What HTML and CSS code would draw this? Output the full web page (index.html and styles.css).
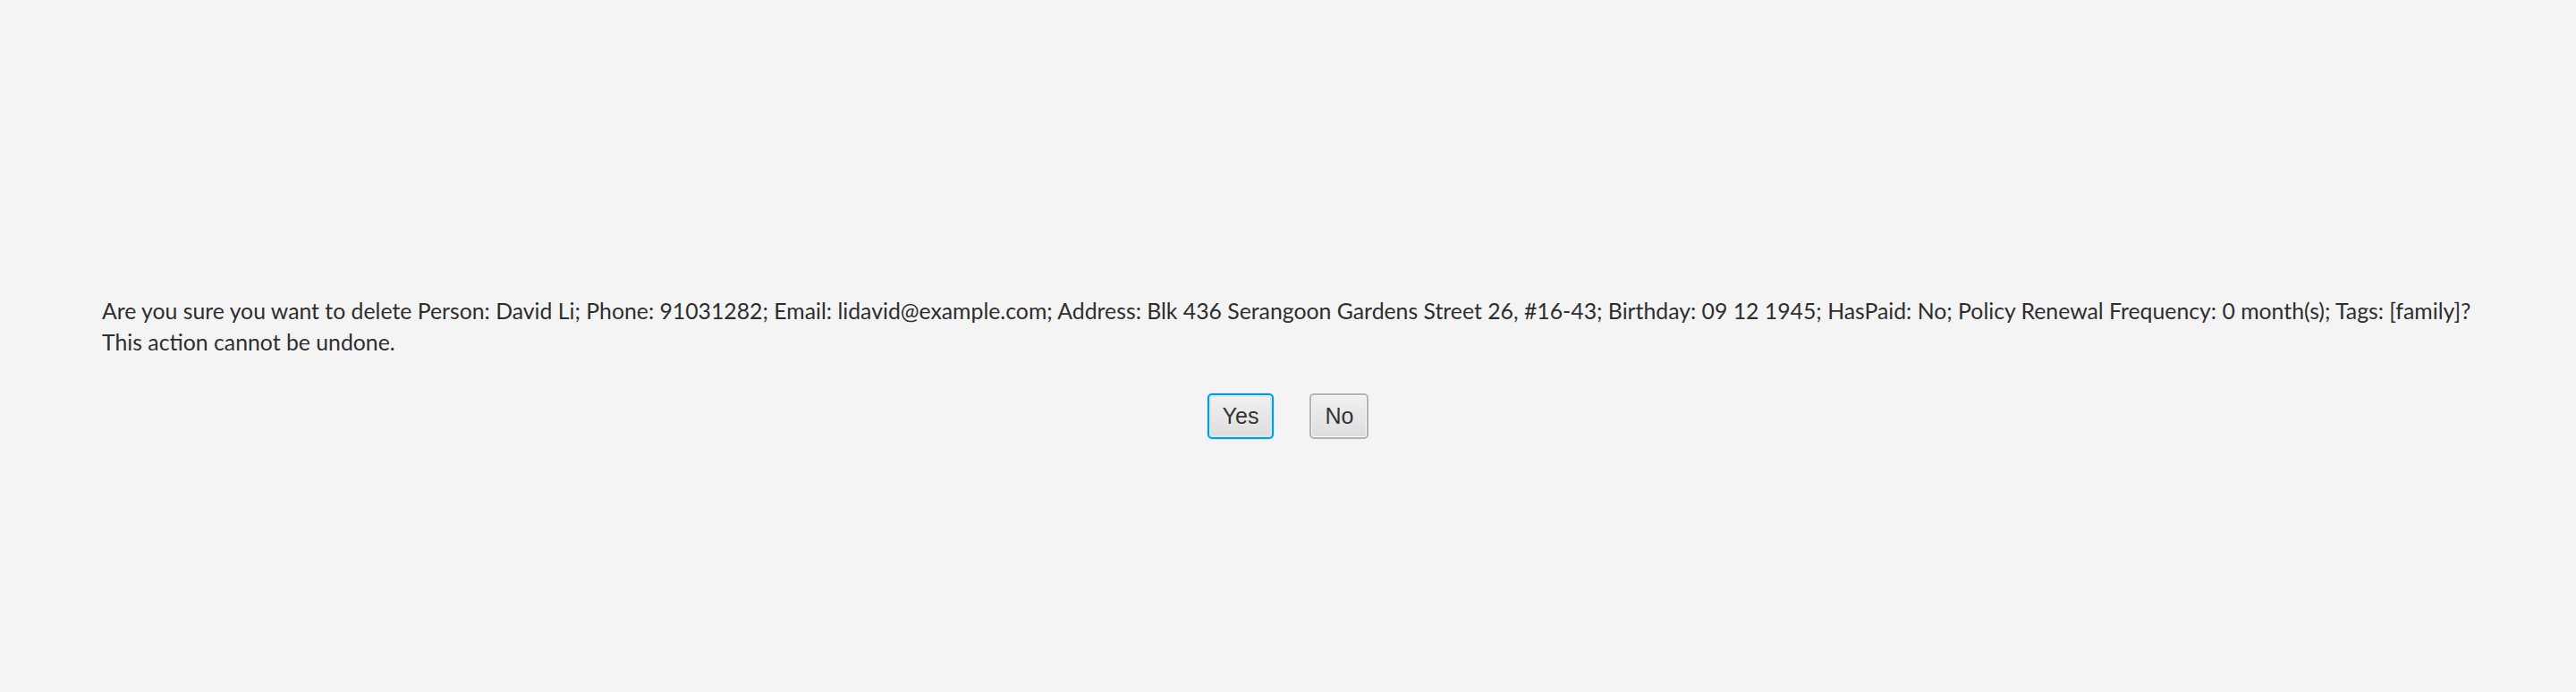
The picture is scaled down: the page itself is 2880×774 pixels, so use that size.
FILE: index.html
```html
<!DOCTYPE html>
<html>
<head>
<meta charset="utf-8">
<link rel="stylesheet" href="styles.css">
</head>
<body>
<div class="dialog">
  <div class="message">
    <p class="line">Are you sure you want to delete Person: David Li; Phone: 91031282; Email: lidavid@example.com; Address: Blk 436 Serangoon Gardens Street 26, #16-43; Birthday: 09 12 1945; HasPaid: No; Policy Renewal Frequency: 0 month(s); Tags: [family]?</p>
    <p class="line">This action cannot be undone.</p>
  </div>
  <div class="buttons">
    <button class="btn btn-default">Yes</button>
    <button class="btn">No</button>
  </div>
</div>
</body>
</html>
```
FILE: styles.css
```css
html, body {
  margin: 0;
  padding: 0;
  background: #f4f4f4;
}
.dialog {
  width: 2880px;
  height: 774px;
  box-sizing: border-box;
  padding-top: 330px;
  display: flex;
  flex-direction: column;
}
.message {
  padding-left: 114px;
  font-family: Lato, "Liberation Sans", sans-serif;
  font-size: 24.8px;
  color: #2e2e2e;
}
.line {
  margin: 0;
  line-height: 35px;
  white-space: nowrap;
}
.buttons {
  display: flex;
  justify-content: center;
  align-items: center;
  gap: 40px;
  margin-top: 40px;
}
.btn {
  height: 51px;
  padding: 0 15px;
  font-family: "Liberation Sans", Arial, sans-serif;
  font-size: 25px;
  color: #333333;
  background: linear-gradient(#f0f0f0, #dedede);
  border: 2px solid #b3b3b3;
  border-radius: 5px;
  box-shadow: inset 0 0 0 1px #f9f9f9;
}
.btn-default {
  border-color: #039ed3;
  box-shadow: 0 0 0 1px #cfe9f4, inset 0 0 0 2px #d6e7ef;
}
```
